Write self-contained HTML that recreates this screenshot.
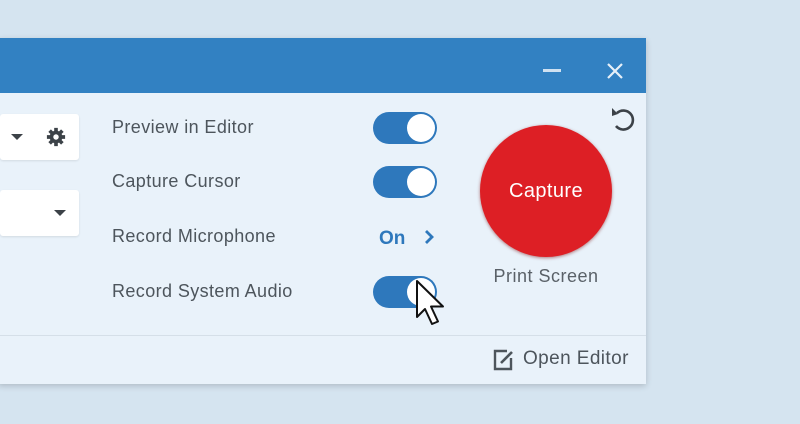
<!DOCTYPE html>
<html><head><style>
body{margin:0;width:800px;height:424px;background:#d5e4f0;position:relative;overflow:hidden;font-family:"Liberation Sans",sans-serif}
.win{position:absolute;left:-2px;top:38px;width:648px;height:346px;background:#e9f2fa;box-shadow:0 2px 6px rgba(0,0,0,.18)}
.title{position:absolute;left:0;top:0;width:648px;height:55px;background:#3281c2}
.box{position:absolute;left:0;width:79px;height:46px;background:#fff;border-radius:3px;box-shadow:0 1px 2px rgba(0,0,0,.1)}
.lbl{position:absolute;left:112px;font-size:18px;letter-spacing:0.4px;color:#4d555c}
.tg{position:absolute;left:373px;width:64px;height:32px;border-radius:16px;background:#2e78bc}
.tg::after{content:"";position:absolute;right:2px;top:2px;width:28px;height:28px;border-radius:50%;background:#fff}
.tri{position:absolute;width:0;height:0;border-left:6px solid transparent;border-right:6px solid transparent;border-top:6px solid #3c4248}
</style></head><body>
<div class="win">
<div class="title">
<div style="position:absolute;left:545px;top:31px;width:18px;height:2.5px;background:#cfe1f1"></div>
<svg style="position:absolute;left:608px;top:24px" width="18" height="18"><path d="M2 2L16 16M16 2L2 16" stroke="#e6f0f8" stroke-width="2.2"/></svg>
</div>
</div>
<div class="box" style="top:114px"></div>
<div class="tri" style="left:11px;top:134px"></div>
<svg style="position:absolute;left:46px;top:127px" width="20" height="20" viewBox="0 0 22 22"><g fill="#3c4248"><circle cx="11" cy="11" r="7"/><g stroke="#3c4248" stroke-width="4"><path d="M11 1v20M1 11h20M4 4l14 14M18 4L4 18"/></g></g><circle cx="11" cy="11" r="3" fill="#fff"/></svg>
<div class="box" style="top:190px"></div>
<div class="tri" style="left:54px;top:210px"></div>
<div class="lbl" style="top:117px">Preview in Editor</div>
<div class="lbl" style="top:171px">Capture Cursor</div>
<div class="lbl" style="top:226px">Record Microphone</div>
<div class="lbl" style="top:281px">Record System Audio</div>
<div class="tg" style="top:112px"></div>
<div class="tg" style="top:166px"></div>
<div class="tg" style="top:276px"></div>
<div style="position:absolute;left:379px;top:228px;font-size:19px;font-weight:bold;color:#2e78bc">On</div>
<svg style="position:absolute;left:423px;top:229px" width="12" height="16"><path d="M3 2l6 6-6 6" stroke="#2e78bc" stroke-width="2.8" fill="none"/></svg>
<svg style="position:absolute;left:413px;top:278px" width="36" height="50"><path d="M4 3v36l8-8 7 15 6-2.5-7-15h12z" fill="#fff" stroke="#111" stroke-width="2" stroke-linejoin="round"/></svg>
<svg style="position:absolute;left:608px;top:104px" width="30" height="30"><path d="M9 9A9.5 9.5 0 1 1 8 22" stroke="#3c4248" stroke-width="2.6" fill="none"/><path d="M4 4L10 10L4 12z" fill="#3c4248"/></svg>
<div style="position:absolute;left:480px;top:125px;width:132px;height:132px;border-radius:50%;background:#dd1f25;box-shadow:0 1px 3px rgba(120,0,0,.5);color:#fff;font-size:20px;letter-spacing:0.4px;line-height:132px;text-align:center">Capture</div>
<div style="position:absolute;left:470px;top:266px;width:152px;text-align:center;font-size:18px;letter-spacing:0.5px;color:#5a6168">Print Screen</div>
<div style="position:absolute;left:0;top:335px;width:646px;height:1px;background:#d5dfe8"></div>
<svg style="position:absolute;left:492px;top:348px" width="24" height="24"><path d="M15 3H3v18h16V10" stroke="#4d555c" stroke-width="2.4" fill="none"/><path d="M9 15l11-11" stroke="#4d555c" stroke-width="2.6"/></svg>
<div style="position:absolute;left:523px;top:348px;font-size:19px;letter-spacing:0.4px;color:#4d555c">Open Editor</div>
</body></html>
